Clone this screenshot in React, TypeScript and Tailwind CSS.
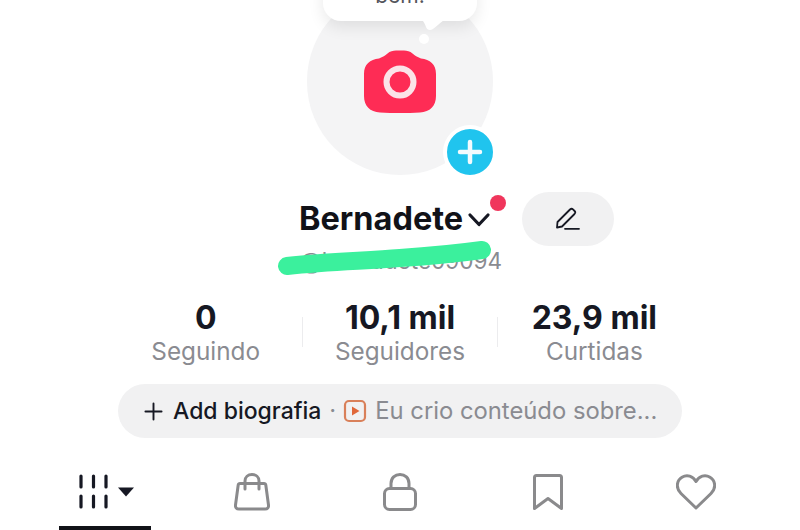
import React from 'react';

const font = { fontFamily: '"Inter", "Liberation Sans", sans-serif' };

const CameraIcon: React.FC = () => (
  <svg width="74" height="64" viewBox="0 0 74 64">
    <path
      d="M16 8.5 C20 7 22 5.5 24.5 3.5 C27 1.2 30 0.5 33 0.5 L41 0.5 C44 0.5 47 1.2 49.5 3.5 C52 5.5 54 7 58 8.5 C67 9.5 73 14 73 24 L73 46 C73 56 67 62 57 62.5 C44 63.3 30 63.3 17 62.5 C7 62 1 56 1 46 L1 24 C1 14 7 9.5 16 8.5 Z"
      fill="#fe2c55"
    />
    <circle cx="37" cy="32" r="13.5" fill="none" stroke="#fbe3e8" strokeWidth="6" />
  </svg>
);

const PencilIcon: React.FC = () => (
  <svg width="26" height="24" viewBox="0 0 26 24" fill="none" stroke="#161823" strokeWidth="1.8" strokeLinejoin="round" strokeLinecap="round">
    <path d="M2 20.5 L2.5 15 L15 2.5 C16 1.6 17.2 1.6 18 2.4 L19.6 4 C20.4 4.8 20.4 6 19.5 7 L7 19.5 Z" />
    <path d="M10 21.8 H24" />
  </svg>
);

const PlayBadge: React.FC = () => (
  <svg width="24" height="24" viewBox="0 0 24 24" fill="none">
    <rect x="2" y="2" width="20" height="20" rx="4" stroke="#d9805a" strokeWidth="2.2" />
    <path d="M9 7.5 L16.5 12 L9 16.5 Z" fill="#e0683a" />
  </svg>
);

const tabStroke = '#8a8a8c';

const GridTab: React.FC = () => (
  <svg width="60" height="36" viewBox="0 0 60 36" stroke="#161823" strokeWidth="3.2" strokeLinecap="round">
    <path d="M3 2 V13 M15.5 2 V13 M28 2 V13 M3 22 V33 M15.5 22 V33 M28 22 V33" />
    <path d="M40 13.5 H56 L48 22.5 Z" fill="#161823" stroke="none" />
  </svg>
);

const BagTab: React.FC = () => (
  <svg width="36" height="38" viewBox="0 0 36 38" fill="none" stroke={tabStroke} strokeWidth="3" strokeLinecap="round" strokeLinejoin="round">
    <path d="M6 10.5 H30 C31 10.5 31.6 11 31.8 12 L34.5 32 C34.8 34.5 33.5 36 31 36 H5 C2.5 36 1.2 34.5 1.5 32 L4.2 12 C4.4 11 5 10.5 6 10.5 Z" />
    <path d="M11 16 V8 C11 4 14 1.5 18 1.5 C22 1.5 25 4 25 8 V16" />
  </svg>
);

const LockTab: React.FC = () => (
  <svg width="34" height="38" viewBox="0 0 34 38" fill="none" stroke={tabStroke} strokeWidth="3" strokeLinecap="round" strokeLinejoin="round">
    <rect x="1.5" y="15.5" width="31" height="21" rx="5" />
    <path d="M8 15.5 V10.5 C8 5 12 1.5 17 1.5 C22 1.5 26 5 26 10.5 V15.5" />
  </svg>
);

const BookmarkTab: React.FC = () => (
  <svg width="30" height="36" viewBox="0 0 30 36" fill="none" stroke={tabStroke} strokeWidth="3" strokeLinecap="round" strokeLinejoin="round">
    <path d="M3.5 1.5 H26.5 C27.8 1.5 28.5 2.2 28.5 3.5 V34.5 L15 24.5 L1.5 34.5 V3.5 C1.5 2.2 2.2 1.5 3.5 1.5 Z" />
  </svg>
);

const HeartTab: React.FC = () => (
  <svg width="40" height="36" viewBox="0 0 40 36" fill="none" stroke={tabStroke} strokeWidth="3" strokeLinecap="round" strokeLinejoin="round">
    <path d="M20 34 L5 19.5 C-0.5 14 0.5 6.5 6 3.2 C11 0.2 17 2 20 7.5 C23 2 29 0.2 34 3.2 C39.5 6.5 40.5 14 35 19.5 Z" />
  </svg>
);

const Stat: React.FC<{ value: string; label: string }> = ({ value, label }) => (
  <div className="flex w-[194px] flex-col items-center">
    <div className="text-[32px] font-bold leading-[36px] text-[#161823]">{value}</div>
    <div className="text-[24.3px] leading-[30px] text-[#8a8b91]">{label}</div>
  </div>
);

export default function App() {
  return (
    <div className="flex h-[530px] w-[800px] flex-col items-center overflow-hidden bg-white" style={font}>
      {/* avatar */}
      <div className="relative mt-[-12px] h-[187px] w-[186px] shrink-0">
        <div className="flex h-[187px] w-[186px] items-center justify-center rounded-full bg-[#f4f4f5]">
          <CameraIcon />
        </div>
        <div className="absolute left-[16px] top-[-20px] flex h-[53px] w-[154px] items-end justify-center rounded-[18px] bg-white pb-[13px] text-[21px] leading-[24px] text-[#55565c] shadow-[0_6px_16px_rgba(0,0,0,0.09)]">
          bem!
        </div>
        <svg className="absolute left-[115px] top-[32px]" width="22" height="12" viewBox="0 0 22 12" fill="#fff">
          <path d="M0 0 H22 C18 3 15 6 11 9 C8 11 5 10 4 7 C3 4 2 2 0 0 Z" />
        </svg>
        <div className="absolute left-[112px] top-[46px] h-[10px] w-[10px] rounded-full bg-white" />
        <div className="absolute left-[137px] top-[138px] flex h-[52px] w-[52px] items-center justify-center rounded-full border-[3px] border-white bg-[#20c4ee] shadow-[0_0_0_1px_#fff]">
          <svg width="26" height="26" viewBox="0 0 26 26" stroke="#f2fbfe" strokeWidth="4.5" strokeLinecap="round">
            <path d="M13 3 V23 M3 13 H23" />
          </svg>
        </div>
      </div>

      {/* name row */}
      <div className="mt-[17px] flex h-[54px] w-[800px] items-center pl-[299px]">
        <div className="text-[32.5px] font-bold leading-[54px] text-[#111218]">Bernadete</div>
        <div className="relative ml-[4px] h-[54px] w-[30px]">
          <svg className="absolute left-0 top-[20px]" width="24" height="16" viewBox="0 0 24 16" fill="none" stroke="#161823" strokeWidth="3.2" strokeLinecap="round" strokeLinejoin="round">
            <path d="M3 3 L12 12.5 L21 3" />
          </svg>
          <div className="absolute left-[23px] top-[3px] h-[16px] w-[16px] rounded-full bg-[#f0365c]" />
        </div>
        <div className="ml-[25px] flex h-[54px] w-[92px] items-center justify-center rounded-full bg-[#f1f1f2]">
          <PencilIcon />
        </div>
      </div>

      {/* handle */}
      <div className="relative h-[30px] w-[800px] pl-[300px] text-[22.6px] leading-[30px] text-[#8a8b91]">
        @bernadete09094
        <svg className="absolute left-[270px] top-[-6px]" width="230" height="40" viewBox="0 0 230 40" fill="none" stroke="#3bf09d" strokeWidth="18" strokeLinecap="round" strokeLinejoin="round">
          <path d="M17 26 C60 21 96 21 130 18 C160 16 190 13 212 10" />
        </svg>
      </div>

      {/* stats */}
      <div className="mt-[24px] flex h-[66px] w-[582px] items-center">
        <Stat value="0" label="Seguindo" />
        <div className="mb-[2px] h-[30px] w-px bg-[#ececee]" />
        <Stat value="10,1 mil" label="Seguidores" />
        <div className="mb-[2px] h-[30px] w-px bg-[#ececee]" />
        <Stat value="23,9 mil" label="Curtidas" />
      </div>

      {/* bio */}
      <div className="mt-[18px] flex h-[54px] w-[564px] items-center whitespace-nowrap rounded-full bg-[#f1f1f2] pl-[26px] text-[23.8px]">
        <svg width="19" height="19" viewBox="0 0 20 20" stroke="#161823" strokeWidth="2" strokeLinecap="round">
          <path d="M10 1.5 V18.5 M1.5 10 H18.5" />
        </svg>
        <span className="ml-[10px] text-[23px] font-medium text-[#161823]">Add biografia</span>
        <span className="ml-[8px] text-[#8a8b91]">·</span>
        <span className="ml-[7px] flex"><PlayBadge /></span>
        <span className="ml-[8px] text-[#8a8b91]">Eu crio conteúdo sobre...</span>
      </div>

      {/* tabs */}
      <div className="mt-[30px] grid h-[62px] w-[740px] grid-cols-5">
        <div className="flex flex-col items-center pl-[2px]">
          <div className="flex h-[58px] w-[92px] items-start justify-center pl-[6px] pt-[6px]">
            <GridTab />
          </div>
          <div className="h-[4px] w-[92px] bg-[#111218]" />
        </div>
        <div className="flex justify-center pt-[5px]"><BagTab /></div>
        <div className="flex justify-center pt-[5px]"><LockTab /></div>
        <div className="flex justify-center pt-[6px]"><BookmarkTab /></div>
        <div className="flex justify-center pt-[6px]"><HeartTab /></div>
      </div>
    </div>
  );
}
